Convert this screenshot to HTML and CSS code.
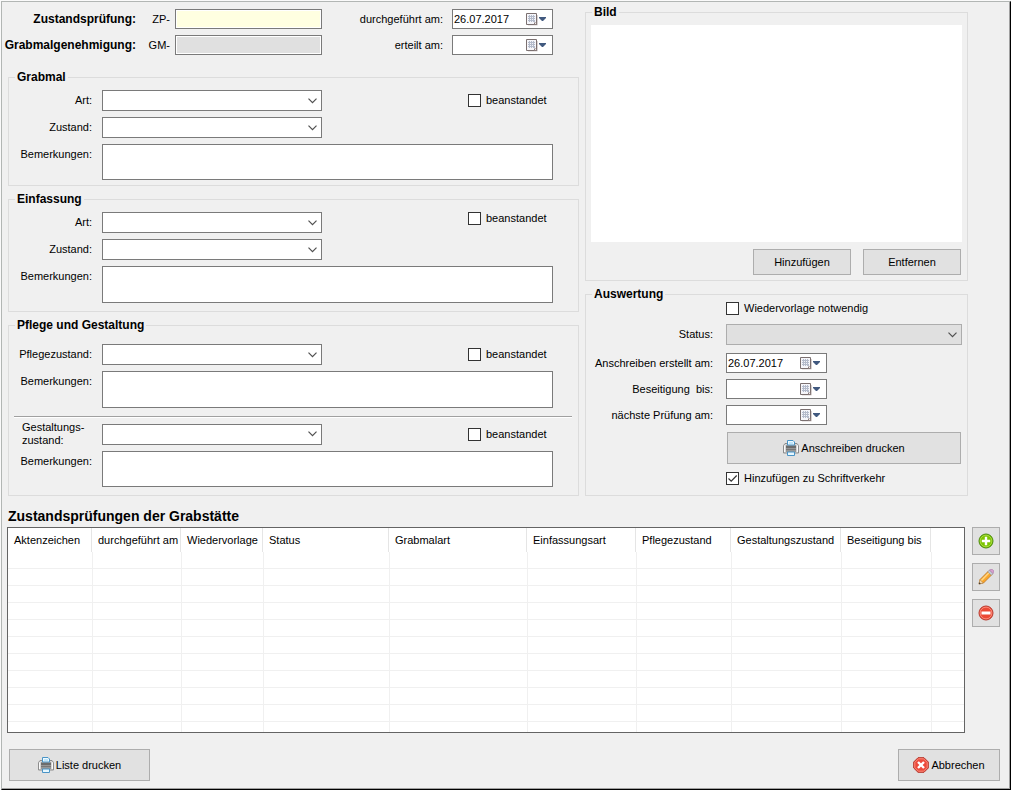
FILE: index.html
```html
<!DOCTYPE html>
<html lang="de">
<head>
<meta charset="utf-8">
<title>Zustandsprüfung</title>
<link rel="stylesheet" href="styles.css">
</head>
<body>
<svg class="defs" aria-hidden="true">
  <defs>
    <symbol id="calendar" viewBox="0 0 13 14">
      <path d="M2 13h9.500V3" fill="none" stroke="#d8d2d2"/>
      <path d="M.5 1.500h10v11H.5z" fill="#f6f6fa" stroke="#7b7070"/>
      <path d="M2 3h7v7H2z" fill="#b4bbcb"/>
      <path d="M2 3h1v1H2zM4 3h1v1H4zM6 3h1v1H6zM8 3h1v1H8zM2 5h1v1H2zM4 5h1v1H4zM6 5h1v1H6zM8 5h1v1H8zM2 7h1v1H2zM4 7h1v1H4zM6 7h1v1H6zM8 7h1v1H8zM2 9h1v1H2zM4 9h1v1H4zM6 9h1v1H6z" fill="#f2f3f8"/>
      <path d="M8 13v-2.500h3V13z" fill="#8a7d7d"/>
      <path d="M9 11h1v1H9z" fill="#efecec"/>
    </symbol>
    <symbol id="drop" viewBox="0 0 7 4"><path d="M0 0h7v1L4 4H3L0 1z" fill="#41597f"/></symbol>
    <symbol id="printer" viewBox="0 0 16 16">
      <path d="M2 3.500h12l1.500 2v7.500H.5V5.500z" fill="#d6d6d6" stroke="#8c8c8c"/>
      <path d="M1.500 5.500v6.500M14.500 5.500v6.500" stroke="#fafafa"/>
      <path d="M3 5h10v7H3z" fill="#979797"/>
      <path d="M3 6h10v2H3z" fill="#6c6c6c"/>
      <path d="M3 9h10v1H3z" fill="#777"/>
      <path d="M4.500 5V.5H10L11.500 2v3z" fill="#eefaff" stroke="#4a94c6"/>
      <path d="M6 2h4v2H6z" fill="#bfe6fb"/>
      <path d="M4.500 12h7v3.500h-7z" fill="#e6f7ff" stroke="#4a94c6"/>
    </symbol>
    <symbol id="plus" viewBox="0 0 16 16">
      <circle cx="8" cy="8" r="7" fill="#7cc400" stroke="#4c8a10"/>
      <circle cx="8" cy="8" r="5.800" fill="none" stroke="#b1e04c" stroke-width=".8"/>
      <path d="M6.800 3.800h2.400v3h3v2.400h-3v3H6.800v-3h-3V6.800h3z" fill="#fff"/>
    </symbol>
    <symbol id="minus" viewBox="0 0 16 16">
      <circle cx="8" cy="8" r="7" fill="#ec4a36" stroke="#b5362b"/>
      <circle cx="8" cy="8" r="5.900" fill="none" stroke="#ff9d8c" stroke-width=".8"/>
      <path d="M3.500 6.500h9v3h-9z" fill="#fff"/>
    </symbol>
    <symbol id="cross" viewBox="0 0 16 16">
      <path d="M5 .7h6L15.300 5v6L11 15.300H5L.7 11V5z" fill="#ec4a3c" stroke="#b5362b"/>
      <path d="M5.400 1.800h5.200l3.600 3.600v5.200l-3.600 3.600H5.400l-3.600-3.600V5.400z" fill="none" stroke="#ff9d8c" stroke-width=".8"/>
      <path d="M5 5l6 6M11 5l-6 6" stroke="#fff" stroke-width="2.400"/>
    </symbol>
    <symbol id="pencil" viewBox="0 0 16 16">
      <path d="M1 15l1-4.500L10.500 2l3.500 3.500L5.500 14z" fill="#f9a62b" stroke="#b9762a" stroke-width=".8"/>
      <path d="M2.800 11L11 2.800l1 1L4 12z" fill="#ffd584"/>
      <path d="M1 15l1-4.200L5.200 14z" fill="#f3d9b0" stroke="#a98250" stroke-width=".5"/>
      <path d="M.8 15.200l.6-2 1.400 1.400z" fill="#333"/>
      <path d="M9.800 2.700l1.700-1.700L15 4.500l-1.700 1.700z" fill="#c8ccd4" stroke="#8a8f99" stroke-width=".6"/>
      <path d="M11.500 1l1-.7h1.700l1.500 1.500v1.700L15 4.500z" fill="#d99fd0" stroke="#a678a4" stroke-width=".6"/>
    </symbol>
  </defs>
</svg>

<main class="window">
  <div class="columns">
    <div class="left">
      <div class="head">
        <strong>Zustandsprüfung:</strong>
        <label for="zp">ZP-</label>
        <input class="field yellow" id="zp" type="text">
        <label class="far" for="d1">durchgeführt am:</label>
        <div class="date"><input id="d1" type="text" value="26.07.2017"><button type="button" aria-label="Kalender"><svg class="cal"><use href="#calendar"/></svg><svg class="drop"><use href="#drop"/></svg></button></div>
        <strong>Grabmalgenehmigung:</strong>
        <label for="gm">GM-</label>
        <input class="field grey" id="gm" type="text" readonly>
        <label class="far" for="d2">erteilt am:</label>
        <div class="date"><input id="d2" type="text"><button type="button" aria-label="Kalender"><svg class="cal"><use href="#calendar"/></svg><svg class="drop"><use href="#drop"/></svg></button></div>
      </div>

      <fieldset class="group grabmal">
        <legend>Grabmal</legend>
        <div class="form">
          <label for="g1">Art:</label>
          <select id="g1"><option></option></select>
          <label class="check"><input type="checkbox">beanstandet</label>
          <label for="g2">Zustand:</label>
          <select id="g2"><option></option></select>
          <label class="top" for="g3">Bemerkungen:</label>
          <textarea id="g3"></textarea>
        </div>
      </fieldset>

      <fieldset class="group einfassung">
        <legend>Einfassung</legend>
        <div class="form">
          <label for="e1">Art:</label>
          <select id="e1"><option></option></select>
          <label class="check raised"><input type="checkbox">beanstandet</label>
          <label for="e2">Zustand:</label>
          <select id="e2"><option></option></select>
          <label class="top" for="e3">Bemerkungen:</label>
          <textarea class="tall" id="e3"></textarea>
        </div>
      </fieldset>

      <fieldset class="group pflege">
        <legend>Pflege und Gestaltung</legend>
        <div class="form">
          <label for="p1">Pflegezustand:</label>
          <select id="p1"><option></option></select>
          <label class="check"><input type="checkbox">beanstandet</label>
          <label class="top" for="p2">Bemerkungen:</label>
          <textarea class="tall" id="p2"></textarea>
        </div>
        <hr>
        <div class="form tight">
          <label class="two" for="p3">Gestaltungs-<br>zustand:</label>
          <select id="p3"><option></option></select>
          <label class="check"><input type="checkbox">beanstandet</label>
          <label class="top" for="p4">Bemerkungen:</label>
          <textarea id="p4"></textarea>
        </div>
      </fieldset>
    </div>

    <div class="right">
      <fieldset class="group bild">
        <legend>Bild</legend>
        <div class="picture"></div>
        <div class="actions">
          <button class="btn" type="button">Hinzufügen</button>
          <button class="btn" type="button">Entfernen</button>
        </div>
      </fieldset>

      <fieldset class="group auswertung">
        <legend>Auswertung</legend>
        <div class="review">
          <label class="check second"><input type="checkbox">Wiedervorlage notwendig</label>
          <label for="a1">Status:</label>
          <select id="a1" disabled><option></option></select>
        </div>
        <div class="review dates">
          <label for="a2">Anschreiben erstellt am:</label>
          <div class="date"><input id="a2" type="text" value="26.07.2017"><button type="button" aria-label="Kalender"><svg class="cal"><use href="#calendar"/></svg><svg class="drop"><use href="#drop"/></svg></button></div>
          <label for="a3">Beseitigung&nbsp; bis:</label>
          <div class="date"><input id="a3" type="text"><button type="button" aria-label="Kalender"><svg class="cal"><use href="#calendar"/></svg><svg class="drop"><use href="#drop"/></svg></button></div>
          <label for="a4">nächste Prüfung am:</label>
          <div class="date"><input id="a4" type="text"><button type="button" aria-label="Kalender"><svg class="cal"><use href="#calendar"/></svg><svg class="drop"><use href="#drop"/></svg></button></div>
        </div>
        <div class="review print">
          <button class="btn big second" type="button"><svg class="icon"><use href="#printer"/></svg>Anschreiben drucken</button>
          <label class="check second"><input type="checkbox" checked>Hinzufügen zu Schriftverkehr</label>
        </div>
      </fieldset>
    </div>
  </div>

  <h2>Zustandsprüfungen der Grabstätte</h2>
  <div class="list">
    <div class="tablebox">
      <table>
        <colgroup><col class="c1"><col class="c2"><col class="c3"><col class="c4"><col class="c5"><col class="c6"><col class="c7"><col class="c8"><col class="c9"><col></colgroup>
        <thead>
          <tr><th>Aktenzeichen</th><th>durchgeführt am</th><th>Wiedervorlage</th><th>Status</th><th>Grabmalart</th><th>Einfassungsart</th><th>Pflegezustand</th><th>Gestaltungszustand</th><th>Beseitigung bis</th><th></th></tr>
        </thead>
        <tbody>
          <tr><td></td><td></td><td></td><td></td><td></td><td></td><td></td><td></td><td></td><td></td></tr>
          <tr><td></td><td></td><td></td><td></td><td></td><td></td><td></td><td></td><td></td><td></td></tr>
          <tr><td></td><td></td><td></td><td></td><td></td><td></td><td></td><td></td><td></td><td></td></tr>
          <tr><td></td><td></td><td></td><td></td><td></td><td></td><td></td><td></td><td></td><td></td></tr>
          <tr><td></td><td></td><td></td><td></td><td></td><td></td><td></td><td></td><td></td><td></td></tr>
          <tr><td></td><td></td><td></td><td></td><td></td><td></td><td></td><td></td><td></td><td></td></tr>
          <tr><td></td><td></td><td></td><td></td><td></td><td></td><td></td><td></td><td></td><td></td></tr>
          <tr><td></td><td></td><td></td><td></td><td></td><td></td><td></td><td></td><td></td><td></td></tr>
          <tr><td></td><td></td><td></td><td></td><td></td><td></td><td></td><td></td><td></td><td></td></tr>
          <tr><td></td><td></td><td></td><td></td><td></td><td></td><td></td><td></td><td></td><td></td></tr>
          <tr class="last"><td></td><td></td><td></td><td></td><td></td><td></td><td></td><td></td><td></td><td></td></tr>
        </tbody>
      </table>
    </div>
    <div class="tools">
      <button class="btn square" type="button" aria-label="Neu"><svg class="icon"><use href="#plus"/></svg></button>
      <button class="btn square" type="button" aria-label="Bearbeiten"><svg class="icon"><use href="#pencil"/></svg></button>
      <button class="btn square" type="button" aria-label="Löschen"><svg class="icon"><use href="#minus"/></svg></button>
    </div>
  </div>

  <footer>
    <button class="btn big liste" type="button"><svg class="icon"><use href="#printer"/></svg>Liste drucken</button>
    <button class="btn big cancel" type="button"><svg class="icon"><use href="#cross"/></svg>Abbrechen</button>
  </footer>
</main>
</body>
</html>
```
FILE: styles.css
```css
* { box-sizing: border-box; }

body {
  margin: 0;
  padding: 1px 0 0 1px;
  background: #fafafa;
  color: #000;
  font: 11px/13px "Liberation Sans", Arial, sans-serif;
}

input, select, textarea, button {
  margin: 0;
  padding: 0;
  border-radius: 0;
  color: inherit;
  font: inherit;
}

.defs { position: absolute; width: 0; height: 0; }

.window {
  min-height: calc(100vh - 1px);
  padding: 3px 9px 7px 6px;
  border: 1px solid #b2b6b4;
  border-right-color: #000;
  border-bottom-color: #000;
  box-shadow: inset -1px -1px #a0a0a0;
  background: #f0f0f0;
}

.columns {
  display: grid;
  grid-template-columns: 571fr 383fr;
  gap: 6px;
  padding-right: 33px;
}

.head {
  display: grid;
  grid-template-columns: 128px 34px 152px 1fr 101px;
  grid-auto-rows: 20px;
  row-gap: 6px;
  align-items: center;
  padding-right: 26px;
  margin: 4px 0 15px;
  text-align: right;
}
.head .field { margin-left: 5px; }
.far { margin-right: 9px; }
strong, legend { font: bold 12px/14px "Liberation Sans", Arial, sans-serif; }
strong { justify-self: end; white-space: nowrap; }

.field, .date, select, textarea {
  border: 1px solid #7a7a7a;
  background: #fff;
}
.field { height: 20px; min-width: 0; box-shadow: inset 0 0 0 1px #fff; }
.yellow { background: #ffffe1; }
.grey { background: #e0e0e0; }

.date { display: flex; width: 101px; height: 20px; }
.date input {
  flex: 1;
  min-width: 0;
  padding-left: 1px;
  border: 0;
  background: none;
}
.date button {
  display: flex;
  align-items: center;
  padding-right: 6px;
  border: 0;
  background: none;
}
.cal { width: 13px; height: 14px; }
.drop { width: 7px; height: 4px; }

.group {
  min-width: 0;
  margin: 0 0 6px;
  padding: 6px 0 5px;
  border: 1px solid #dcdcdc;
}
legend { margin-left: 6px; padding: 0 2px; }
.einfassung { padding-bottom: 8px; }
.pflege { padding: 12px 0 8px; }

.form {
  display: grid;
  grid-template-columns: 83px 220px 1fr 85px;
  gap: 6px 10px;
  align-items: center;
  padding-right: 25px;
}
.form > label { grid-column: 1; text-align: right; }
.form select { grid-column: 2; }
.form textarea { grid-column: 2 / -1; }
.form > .check { grid-column: 4; }
.form .top { align-self: start; line-height: 20px; }
.form .raised { align-self: start; }
.form .two { padding-left: 13px; text-align: left; }
.tight { row-gap: 4px; }
hr {
  height: 2px;
  margin: 8px 6px 3px 5px;
  border: 0;
  border-top: 1px solid #a0a0a0;
  background: #fff;
}

select {
  height: 21px;
  width: 100%;
  appearance: none;
  background: #fff url("data:image/svg+xml,%3Csvg xmlns='http://www.w3.org/2000/svg' width='9' height='6'%3E%3Cpath d='M.5.700l4 4 4-4' fill='none' stroke='%23505050' stroke-width='1.200'/%3E%3C/svg%3E") no-repeat right 4px center;
}
select:disabled { border-color: #adadad; background-color: #e0e0e0; opacity: 1; }
textarea { display: block; width: 100%; height: 36px; resize: none; }
.tall { height: 37px; }

.check { display: flex; align-items: center; gap: 5px; white-space: nowrap; }
.check input {
  flex: none;
  width: 13px;
  height: 13px;
  border: 1px solid #333;
  background: #fff;
  appearance: none;
}
.check input:checked {
  background: #fff url("data:image/svg+xml,%3Csvg xmlns='http://www.w3.org/2000/svg' width='11' height='11'%3E%3Cpath d='M1.500 5.500l2.700 2.700L9.700 2.500' fill='none' stroke='%23333' stroke-width='1.200'/%3E%3C/svg%3E") no-repeat center;
}

.picture { height: 217px; margin: 0 5px; background: #fff; }
.actions { display: flex; justify-content: flex-end; gap: 12px; padding: 7px 6px 0; }
.actions .btn { width: 98px; height: 26px; }

.btn {
  display: flex;
  align-items: center;
  justify-content: center;
  gap: 2px;
  border: 1px solid #adadad;
  background: #e1e1e1;
}
.big { height: 32px; }
.square { width: 28px; height: 28px; }
.icon { width: 16px; height: 16px; flex: none; }

.auswertung { padding: 1px 5px 10px 0; }
.review {
  display: grid;
  grid-template-columns: 127px 1fr;
  gap: 8px 13px;
  align-items: center;
  text-align: right;
}
.review:first-of-type { row-gap: 9px; }
.dates { row-gap: 6px; margin: 8px 0 7px; }
.second { grid-column: 2; }
.print .btn { margin: 0 1px; }

h2 { margin: 6px 0 3px; font: bold 14px/16px "Liberation Sans", Arial, sans-serif; }
.list { display: flex; gap: 7px; margin-left: -1px; }
.tablebox { flex: 1; border: 1px solid #646464; background: #fff; }
table { width: 100%; table-layout: fixed; border-collapse: separate; border-spacing: 0; }
.c1 { width: 84px; }
.c2 { width: 89px; }
.c3 { width: 82px; }
.c4 { width: 126px; }
.c5 { width: 138px; }
.c6 { width: 109px; }
.c7 { width: 95px; }
.c8 { width: 110px; }
.c9 { width: 90px; }
th {
  height: 24px;
  padding: 0 0 0 6px;
  border-right: 1px solid #e5e5e5;
  font-weight: normal;
  text-align: left;
  white-space: nowrap;
}
td {
  height: 17px;
  padding: 0;
  border-left: 1px solid #f0f0f0;
  border-bottom: 1px solid #f0f0f0;
}
th:last-child { border-right: 0; }
td:first-child { border-left: 0; }
.last td { height: 10px; border-bottom: 0; }
.tools { display: flex; flex-direction: column; gap: 8px; margin-right: 1px; }

footer { display: flex; justify-content: space-between; margin: 16px 1px 0 1px; }
.liste { width: 141px; }
.cancel { width: 102px; }
```
